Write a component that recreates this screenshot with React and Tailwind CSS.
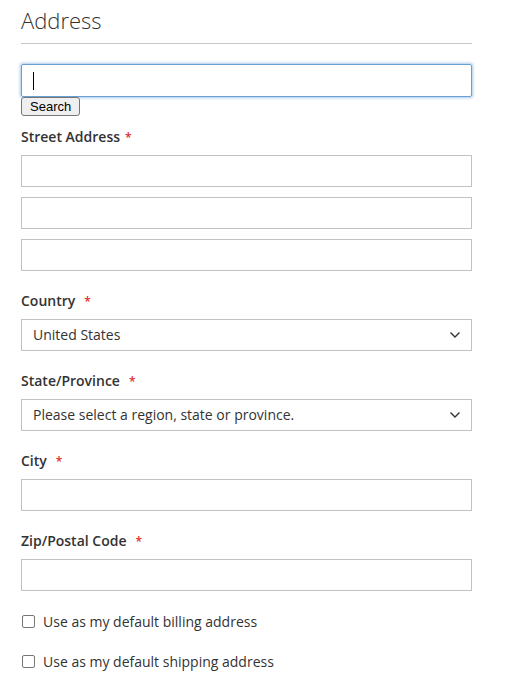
const font = { fontFamily: '"Open Sans", "Liberation Sans", sans-serif' };

const Chevron = () => (
  <svg width="14" height="14" viewBox="0 0 14 14" className="absolute right-[10px] top-[9px]">
    <path d="M2.5 4.5 L7 9 L11.5 4.5" fill="none" stroke="#333" strokeWidth="1.4" />
  </svg>
);

const Label = ({ text, wide }) => (
  <div className="h-[20px] mb-[8px] text-[14px] font-semibold text-[#333] leading-[20px] whitespace-nowrap">
    {text}
    <span className={`text-[#e02b27] text-[12px] leading-none ${wide ? "ml-[9px]" : "ml-[5px]"}`}>*</span>
  </div>
);

const Input = () => (
  <input
    type="text"
    className="block w-full h-[32px] border border-[#c2c2c2] bg-white px-[9px] text-[14px] outline-none"
  />
);

const Select = ({ value }) => (
  <div className="relative">
    <div className="h-[32px] border border-[#c2c2c2] bg-white pl-[11px] text-[14px] text-[#333] leading-[29px]">
      {value}
    </div>
    <Chevron />
  </div>
);

const Check = ({ text }) => (
  <label className="flex items-center h-[20px]">
    <span className="w-[13px] h-[13px] border border-[#767676] rounded-[2px] bg-white ml-[1px] mr-[8px]" />
    <span className="text-[14px] text-[#333]">{text}</span>
  </label>
);

export default function App() {
  return (
    <div style={font} className="bg-white w-[516px] h-[692px] overflow-hidden pl-[21px] pr-[44px]">
      <div className="text-[22px] font-light text-[#333] leading-[28px] pt-[6px] pb-[9px] border-b border-[#c6c6c6]">
        Address
      </div>

      <div className="mt-[20px] h-[33px] border border-[#6b9fd1] rounded-[2px] shadow-[0_0_3px_1px_#a9c8ea] flex items-center pl-[11px]">
        <span className="w-[1px] h-[18px] bg-black" />
      </div>
      <button
        className="block h-[19px] px-[8px] border border-[#767676] rounded-[3px] bg-[#efefef] text-[13px] leading-[16px] text-black"
        style={{ fontFamily: '"Liberation Sans", Arial, sans-serif' }}
      >
        Search
      </button>

      <div className="mt-[11px]">
        <Label text="Street Address" />
        <div className="flex flex-col gap-[10px]">
          <Input />
          <Input />
          <Input />
        </div>
      </div>

      <div className="mt-[20px]">
        <Label text="Country" wide />
        <Select value="United States" />
      </div>

      <div className="mt-[20px]">
        <Label text="State/Province" wide />
        <Select value="Please select a region, state or province." />
      </div>

      <div className="mt-[20px]">
        <Label text="City" wide />
        <Input />
      </div>

      <div className="mt-[20px]">
        <Label text="Zip/Postal Code" wide />
        <Input />
      </div>

      <div className="mt-[20px] flex flex-col gap-[20px]">
        <Check text="Use as my default billing address" />
        <Check text="Use as my default shipping address" />
      </div>
    </div>
  );
}
